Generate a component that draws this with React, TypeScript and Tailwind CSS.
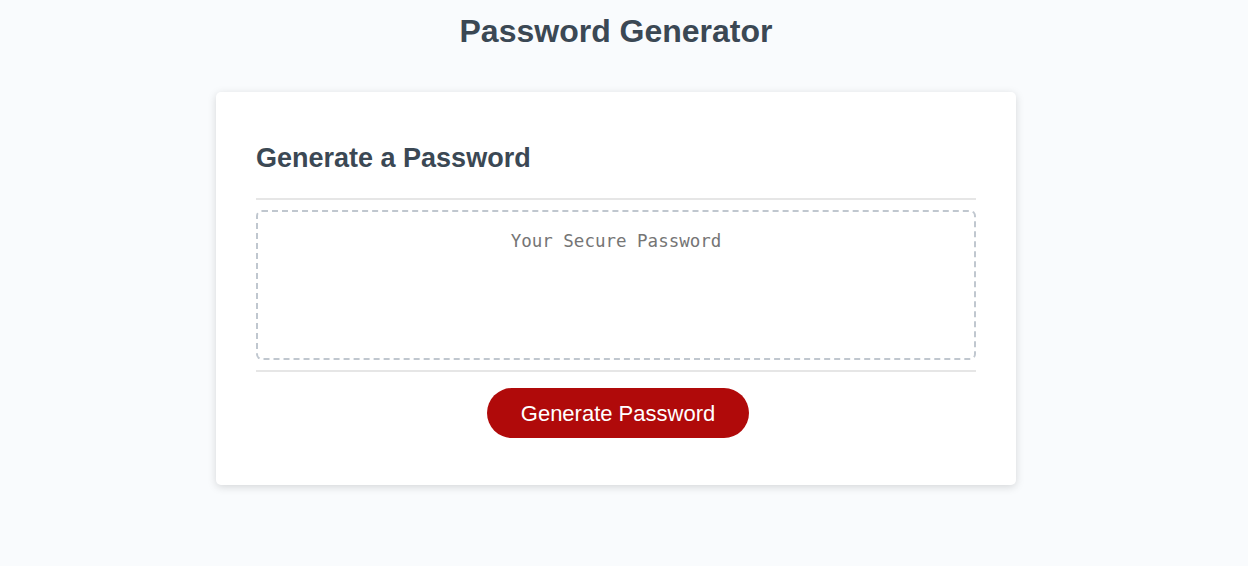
import React from 'react';

const App: React.FC = () => {
  return (
    <div className="min-h-[566px] bg-[#f9fbfd] pr-[16px] font-['Liberation_Sans',Arial,sans-serif] text-[#3b4854]">
      <div className="flex flex-col items-center">
        <h1 className="mt-[12px] text-[32px] leading-[38px] font-bold">Password Generator</h1>

        <div className="mt-[42px] w-[800px] rounded-[5px] bg-white px-[40px] pt-[50px] pb-[47px] shadow-[0_2px_8px_0_rgba(0,0,0,0.15)]">
          <h2 className="border-b-2 border-[#e6e6e6] pb-[24px] text-[27px] leading-[32px] font-bold">Generate a Password</h2>

          <div className="border-b-2 border-[#e6e6e6] py-[10px]">
            <textarea
              readOnly
              placeholder="Your Secure Password"
              className="block h-[150px] w-full resize-none rounded-[6px] border-2 border-dashed border-[#c0c7cf] px-[16px] pt-[19px] text-center font-['DejaVu_Sans_Mono',monospace] text-[17.5px] leading-[20px] outline-none placeholder:text-[#757575]"
            />
          </div>

          <div className="flex justify-center pt-[16px]">
            <button className="ml-[4px] h-[50px] w-[262px] rounded-[25px] bg-[#b00a0a] text-[22px] text-white">
              Generate Password
            </button>
          </div>
        </div>
      </div>
    </div>
  );
};

export default App;
